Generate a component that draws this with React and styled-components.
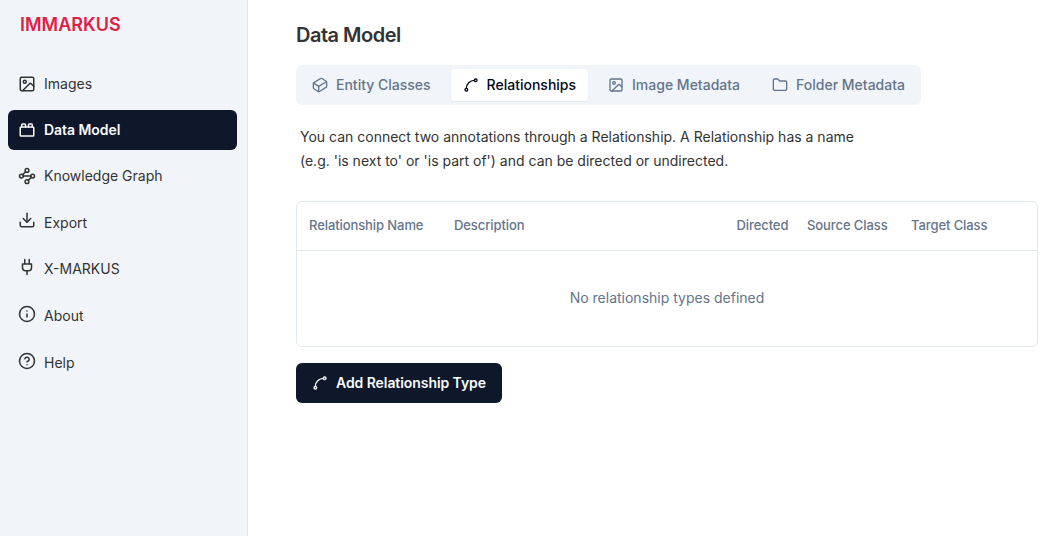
import React from 'react';
import styled, { createGlobalStyle } from 'styled-components';
import {
  Image, ToyBrick, Waypoints, Download, Info, CircleHelp, Cuboid, Spline, Folder,
} from 'lucide-react';

const GlobalStyle = createGlobalStyle`
  *, *::before, *::after { box-sizing: border-box; }
  body {
    margin: 0;
    background: #fff;
    color: #333;
    font-family: Inter, "Liberation Sans", sans-serif;
    font-size: 14px;
  }
`;

const Page = styled.div`
  display: flex;
  height: 100vh;
  overflow: hidden;
`;

const Sidebar = styled.aside`
  flex: 0 0 248px;
  padding: 12px 10px 0 8px;
  background: #f1f5f9;
  border-right: 1px solid #e2e8f0;
`;

const Brand = styled.h1`
  margin: 0 0 27px;
  padding-left: 12px;
  font-size: 18px;
  line-height: 25px;
  font-weight: 600;
  color: #e11d48;
`;

const NavList = styled.nav`
  display: flex;
  flex-direction: column;
  gap: 6px;
`;

const NavItem = styled.a`
  display: flex;
  align-items: center;
  gap: 8px;
  height: 40px;
  margin-top: ${p => (p.$lift ? '0.67px' : '0')};
  padding: 0 10px;
  border-radius: 6px;
  color: ${p => (p.$active ? '#f8fafc' : '#333')};
  background: ${p => (p.$active ? '#0f172a' : 'transparent')};
  font-weight: ${p => (p.$active ? 600 : 400)};
  letter-spacing: ${p => (p.$active ? '-0.05px' : '0')};

  svg { margin-bottom: ${p => p.$lift || 0}px; }
  span { padding-bottom: 1px; }
`;

const Main = styled.main`
  flex: 1;
  min-width: 0;
  padding: 22px 26px 0 48px;
`;

const Title = styled.h2`
  margin: 0 0 17px;
  font-size: 20px;
  line-height: 26px;
  font-weight: 600;
  letter-spacing: -0.5px;
`;

const TabList = styled.div`
  display: inline-flex;
  align-items: center;
  gap: 8px;
  height: 40px;
  padding: 4px;
  border-radius: 6px;
  background: #f1f5f9;
`;

const Tab = styled.button`
  display: flex;
  align-items: center;
  gap: 8px;
  height: 32px;
  padding: 0 12px;
  border: 0;
  border-radius: 4px;
  font: 500 14px/20px Inter, sans-serif;
  white-space: nowrap;
  color: ${p => (p.$active ? '#020817' : '#64748b')};
  background: ${p => (p.$active ? '#fff' : 'transparent')};
  box-shadow: ${p => (p.$active ? '0 1px 2px rgba(0, 0, 0, 0.05)' : 'none')};
`;

const Intro = styled.p`
  width: 576px;
  margin: 20px 0 28px;
  padding-left: 4px;
  line-height: 24px;
`;

const TableFrame = styled.div`
  height: 146px;
  border: 1px solid #e2e8f0;
  border-radius: 6px;
`;

const HeaderRow = styled.div`
  display: grid;
  grid-template-columns: 145px 282.5px 70.5px 104px 1fr;
  align-items: center;
  height: 49px;
  padding: 0 0 2px 12px;
  border-bottom: 1px solid #e2e8f0;
  font-size: 13px;
  letter-spacing: -0.09px;
  font-weight: 500;
  color: #64748b;
`;

const EmptyRow = styled.div`
  display: flex;
  align-items: center;
  justify-content: center;
  height: 95px;
  padding-bottom: 2px;
  color: #64748b;
`;

const AddButton = styled.button`
  display: flex;
  align-items: center;
  gap: 8px;
  height: 40px;
  margin-top: 16px;
  padding: 0 16px;
  border: 0;
  border-radius: 6px;
  font: 600 14px/20px Inter, sans-serif;
  letter-spacing: -0.07px;
  white-space: nowrap;
  color: #f8fafc;
  background: #0f172a;
`;

// Two straight prongs, a rounded body and a single cord.
const PlugIcon = ({ size }) => (
  <svg
    width={size}
    height={size}
    viewBox="0 0 24 24"
    fill="none"
    stroke="currentColor"
    strokeWidth="2"
    strokeLinecap="round"
    strokeLinejoin="round"
  >
    <path d="M12 22v-5M9 8V2M15 8V2M18 8v5a4 4 0 0 1-4 4h-4a4 4 0 0 1-4-4V8Z" />
  </svg>
);

const navItems = [
  { label: 'Images', icon: Image },
  { label: 'Data Model', icon: ToyBrick, active: true },
  { label: 'Knowledge Graph', icon: Waypoints },
  { label: 'Export', icon: Download, lift: 5 },
  { label: 'X-MARKUS', icon: PlugIcon, lift: 4 },
  { label: 'About', icon: Info, lift: 4 },
  { label: 'Help', icon: CircleHelp, lift: 4 },
];

const tabs = [
  { label: 'Entity Classes', icon: Cuboid },
  { label: 'Relationships', icon: Spline, active: true },
  { label: 'Image Metadata', icon: Image },
  { label: 'Folder Metadata', icon: Folder },
];

const columns = ['Relationship Name', 'Description', 'Directed', 'Source Class', 'Target Class'];

export default function App() {
  return (
    <Page>
      <GlobalStyle />
      <Sidebar>
        <Brand>IMMARKUS</Brand>
        <NavList>
          {navItems.map(({ label, icon: Icon, active, lift }) => (
            <NavItem key={label} $active={active} $lift={lift}>
              <Icon size={18} />
              <span>{label}</span>
            </NavItem>
          ))}
        </NavList>
      </Sidebar>
      <Main>
        <Title>Data Model</Title>
        <TabList>
          {tabs.map(({ label, icon: Icon, active }) => (
            <Tab key={label} $active={active}>
              <Icon size={16} />
              {label}
            </Tab>
          ))}
        </TabList>
        <Intro>
          You can connect two annotations through a Relationship. A Relationship has a name
          (e.g. 'is next to' or 'is part of') and can be directed or undirected.
        </Intro>
        <TableFrame>
          <HeaderRow>
            {columns.map(c => <span key={c}>{c}</span>)}
          </HeaderRow>
          <EmptyRow>No relationship types defined</EmptyRow>
        </TableFrame>
        <AddButton>
          <Spline size={16} />
          Add Relationship Type
        </AddButton>
      </Main>
    </Page>
  );
}
